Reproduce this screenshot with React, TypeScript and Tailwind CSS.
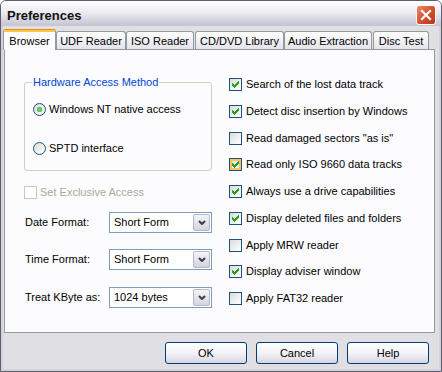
import React from "react";

const checks = [
  { label: "Search of the lost data track", checked: true },
  { label: "Detect disc insertion by Windows", checked: true },
  { label: 'Read damaged sectors "as is"', checked: false },
  { label: "Read only ISO 9660 data tracks", checked: true, hover: true },
  { label: "Always use a drive capabilities", checked: true },
  { label: "Display deleted files and folders", checked: true },
  { label: "Apply MRW reader", checked: false },
  { label: "Display adviser window", checked: true },
  { label: "Apply FAT32 reader", checked: false },
];

const tabs = [
  { label: "UDF Reader", cls: "w-[70px]" },
  { label: "ISO Reader", cls: "w-[68px]" },
  { label: "CD/DVD Library", cls: "w-[89px] ml-[1px]" },
  { label: "Audio Extraction", cls: "w-[88px]" },
  { label: "Disc Test", cls: "w-[56px] ml-[1px]" },
];

function CheckMark() {
  // XP style 7x7 pixel tick
  return (
    <svg width="11" height="11" viewBox="0 0 11 11" shapeRendering="crispEdges" className="absolute left-0 top-0">
      <path
        fill="#21a121"
        d="M8 2h1v1h-1z M7 3h2v1h-2z M2 4h1v1h-1z M6 4h3v1h-3z M2 5h2v1h-2z M5 5h3v1h-3z M2 6h5v1h-5z M3 7h3v1h-3z M4 8h1v1h-1z"
      />
    </svg>
  );
}

function Checkbox({ checked, hover, disabled }: { checked?: boolean; hover?: boolean; disabled?: boolean }) {
  return (
    <span
      className={`relative block h-[13px] w-[13px] shrink-0 border ${
        disabled
          ? "border-[#cac8bb] bg-white"
          : "border-[#1c5180] bg-linear-to-br from-[#dcdcd7] to-white"
      } ${hover ? "shadow-[inset_0_0_0_2px_#fbc35e]" : ""}`}
    >
      {checked && <CheckMark />}
    </span>
  );
}

function Radio({ checked }: { checked?: boolean }) {
  return (
    <span className="flex h-[13px] w-[13px] shrink-0 items-center justify-center rounded-full border border-[#1c5180] bg-linear-to-br from-[#dcdcd7] to-white">
      {checked && <span className="h-[5px] w-[5px] rounded-full bg-radial from-[#7ee27c] to-[#1f9d1f]" />}
    </span>
  );
}

function Combo({ label, value, cls }: { label: string; value: string; cls: string }) {
  return (
    <div className={`flex items-center ${cls}`}>
      <span className="ml-[1px] w-[84px]">{label}</span>
      <div className="flex h-[21px] w-[103px] items-center border border-[#7f9db9] bg-white pl-[4px] pr-[1px]">
        <span className="flex-1">{value}</span>
        <span className="flex h-[17px] w-[17px] items-center justify-center rounded-[2px] border border-[#b5b8ca] bg-linear-to-b from-[#f4f4f8] to-[#d3d4df]">
          <svg width="8" height="5" viewBox="0 0 8 5">
            <path d="M1 1 L4 4 L7 1" stroke="#3c3c48" strokeWidth="2" fill="none" />
          </svg>
        </span>
      </div>
    </div>
  );
}

function Button({ children }: { children: React.ReactNode }) {
  return (
    <div className="flex h-[22px] w-[82px] items-center justify-center rounded-[3px] border border-[#003c74] bg-linear-to-b from-white via-[#f3f3f7] to-[#d6d6e2]">
      {children}
    </div>
  );
}

export default function App() {
  return (
    <div className="h-[372px] w-[442px] bg-white">
      <div className="flex h-[372px] w-[442px] flex-col rounded-t-[6px] border border-[#5e5d70] bg-[#e0dfe3] font-['Liberation_Sans',Arial,sans-serif] text-[11px] leading-[13px] text-black">
        {/* title bar */}
        <div className="flex h-[25px] shrink-0 items-start justify-between rounded-t-[5px] bg-linear-to-b from-white via-[#e9e9ef] to-[#c4c3d2] pl-[6px] pr-[5px]">
          <span className="mt-[7px] text-[13px] font-bold leading-[15px] text-[#111]">Preferences</span>
          <span className="mt-[4px] flex h-[20px] w-[20px] items-center justify-center rounded-[3px] border border-white bg-linear-to-br from-[#e98a6c] via-[#d4512f] to-[#b8341a]">
            <svg width="12" height="12" viewBox="0 0 12 12">
              <path d="M2 2 L10 10 M10 2 L2 10" stroke="white" strokeWidth="2.2" strokeLinecap="square" />
            </svg>
          </span>
        </div>

        {/* body */}
        <div className="flex flex-1 flex-col border-x-2 border-b-2 border-[#d2d1dc] pt-[3px]">
          {/* tabs */}
          <div className="flex h-[20px] items-end">
            <div className="relative z-10 -mb-px flex h-[21px] w-[53px] flex-col rounded-t-[3px] border-x border-[#919b9c] bg-[#fcfcfe]">
              <span className="h-[1px] rounded-t-[3px] bg-[#e68b2c]" />
              <span className="h-[2px] bg-[#ffc73c]" />
              <span className="mt-[3px] text-center">Browser</span>
            </div>
            {tabs.map((t) => (
              <div
                key={t.label}
                className={`flex h-[18px] items-center justify-center rounded-t-[3px] border-x border-t border-[#919b9c] bg-linear-to-b from-white to-[#e4e3ea] pt-[1px] ${t.cls}`}
              >
                {t.label}
              </div>
            ))}
          </div>

          {/* panel */}
          <div className="ml-[1px] flex h-[284px] w-[431px] border border-[#919b9c] bg-[#fcfcfe]">
            {/* left column */}
            <div className="ml-[19px] flex w-[188px] flex-col pt-[32px]">
              <div className="relative h-[89px] rounded-[3px] border border-[#d0d0bf] pl-[8px] pt-[20px]">
                <span className="absolute -top-[7px] left-[7px] bg-[#fcfcfe] px-[1px] text-[#0046d5]">
                  Hardware Access Method
                </span>
                <div className="flex flex-col gap-[26px]">
                  <div className="flex h-[13px] items-center gap-[3px]">
                    <Radio checked />
                    <span>Windows NT native access</span>
                  </div>
                  <div className="flex h-[13px] items-center gap-[3px]">
                    <Radio />
                    <span>SPTD interface</span>
                  </div>
                </div>
              </div>

              <div className="mt-[15px] flex h-[13px] items-center gap-[3px]">
                <Checkbox disabled />
                <span className="text-[#aca899]">Set Exclusive Access</span>
              </div>

              <Combo label="Date Format:" value="Short Form" cls="mt-[13px]" />
              <Combo label="Time Format:" value="Short Form" cls="mt-[16px]" />
              <Combo label="Treat KByte as:" value="1024 bytes" cls="mt-[17px]" />
            </div>

            {/* right column */}
            <div className="ml-[17px] flex flex-col gap-[13.75px] pt-[28px]">
              {checks.map((c) => (
                <div key={c.label} className="flex h-[13px] items-center gap-[4px]">
                  <Checkbox checked={c.checked} hover={c.hover} />
                  <span>{c.label}</span>
                </div>
              ))}
            </div>
          </div>

          {/* buttons */}
          <div className="mt-[9px] flex justify-end gap-[9px] pr-[10px]">
            <Button>OK</Button>
            <Button>Cancel</Button>
            <Button>Help</Button>
          </div>
        </div>
      </div>
    </div>
  );
}
